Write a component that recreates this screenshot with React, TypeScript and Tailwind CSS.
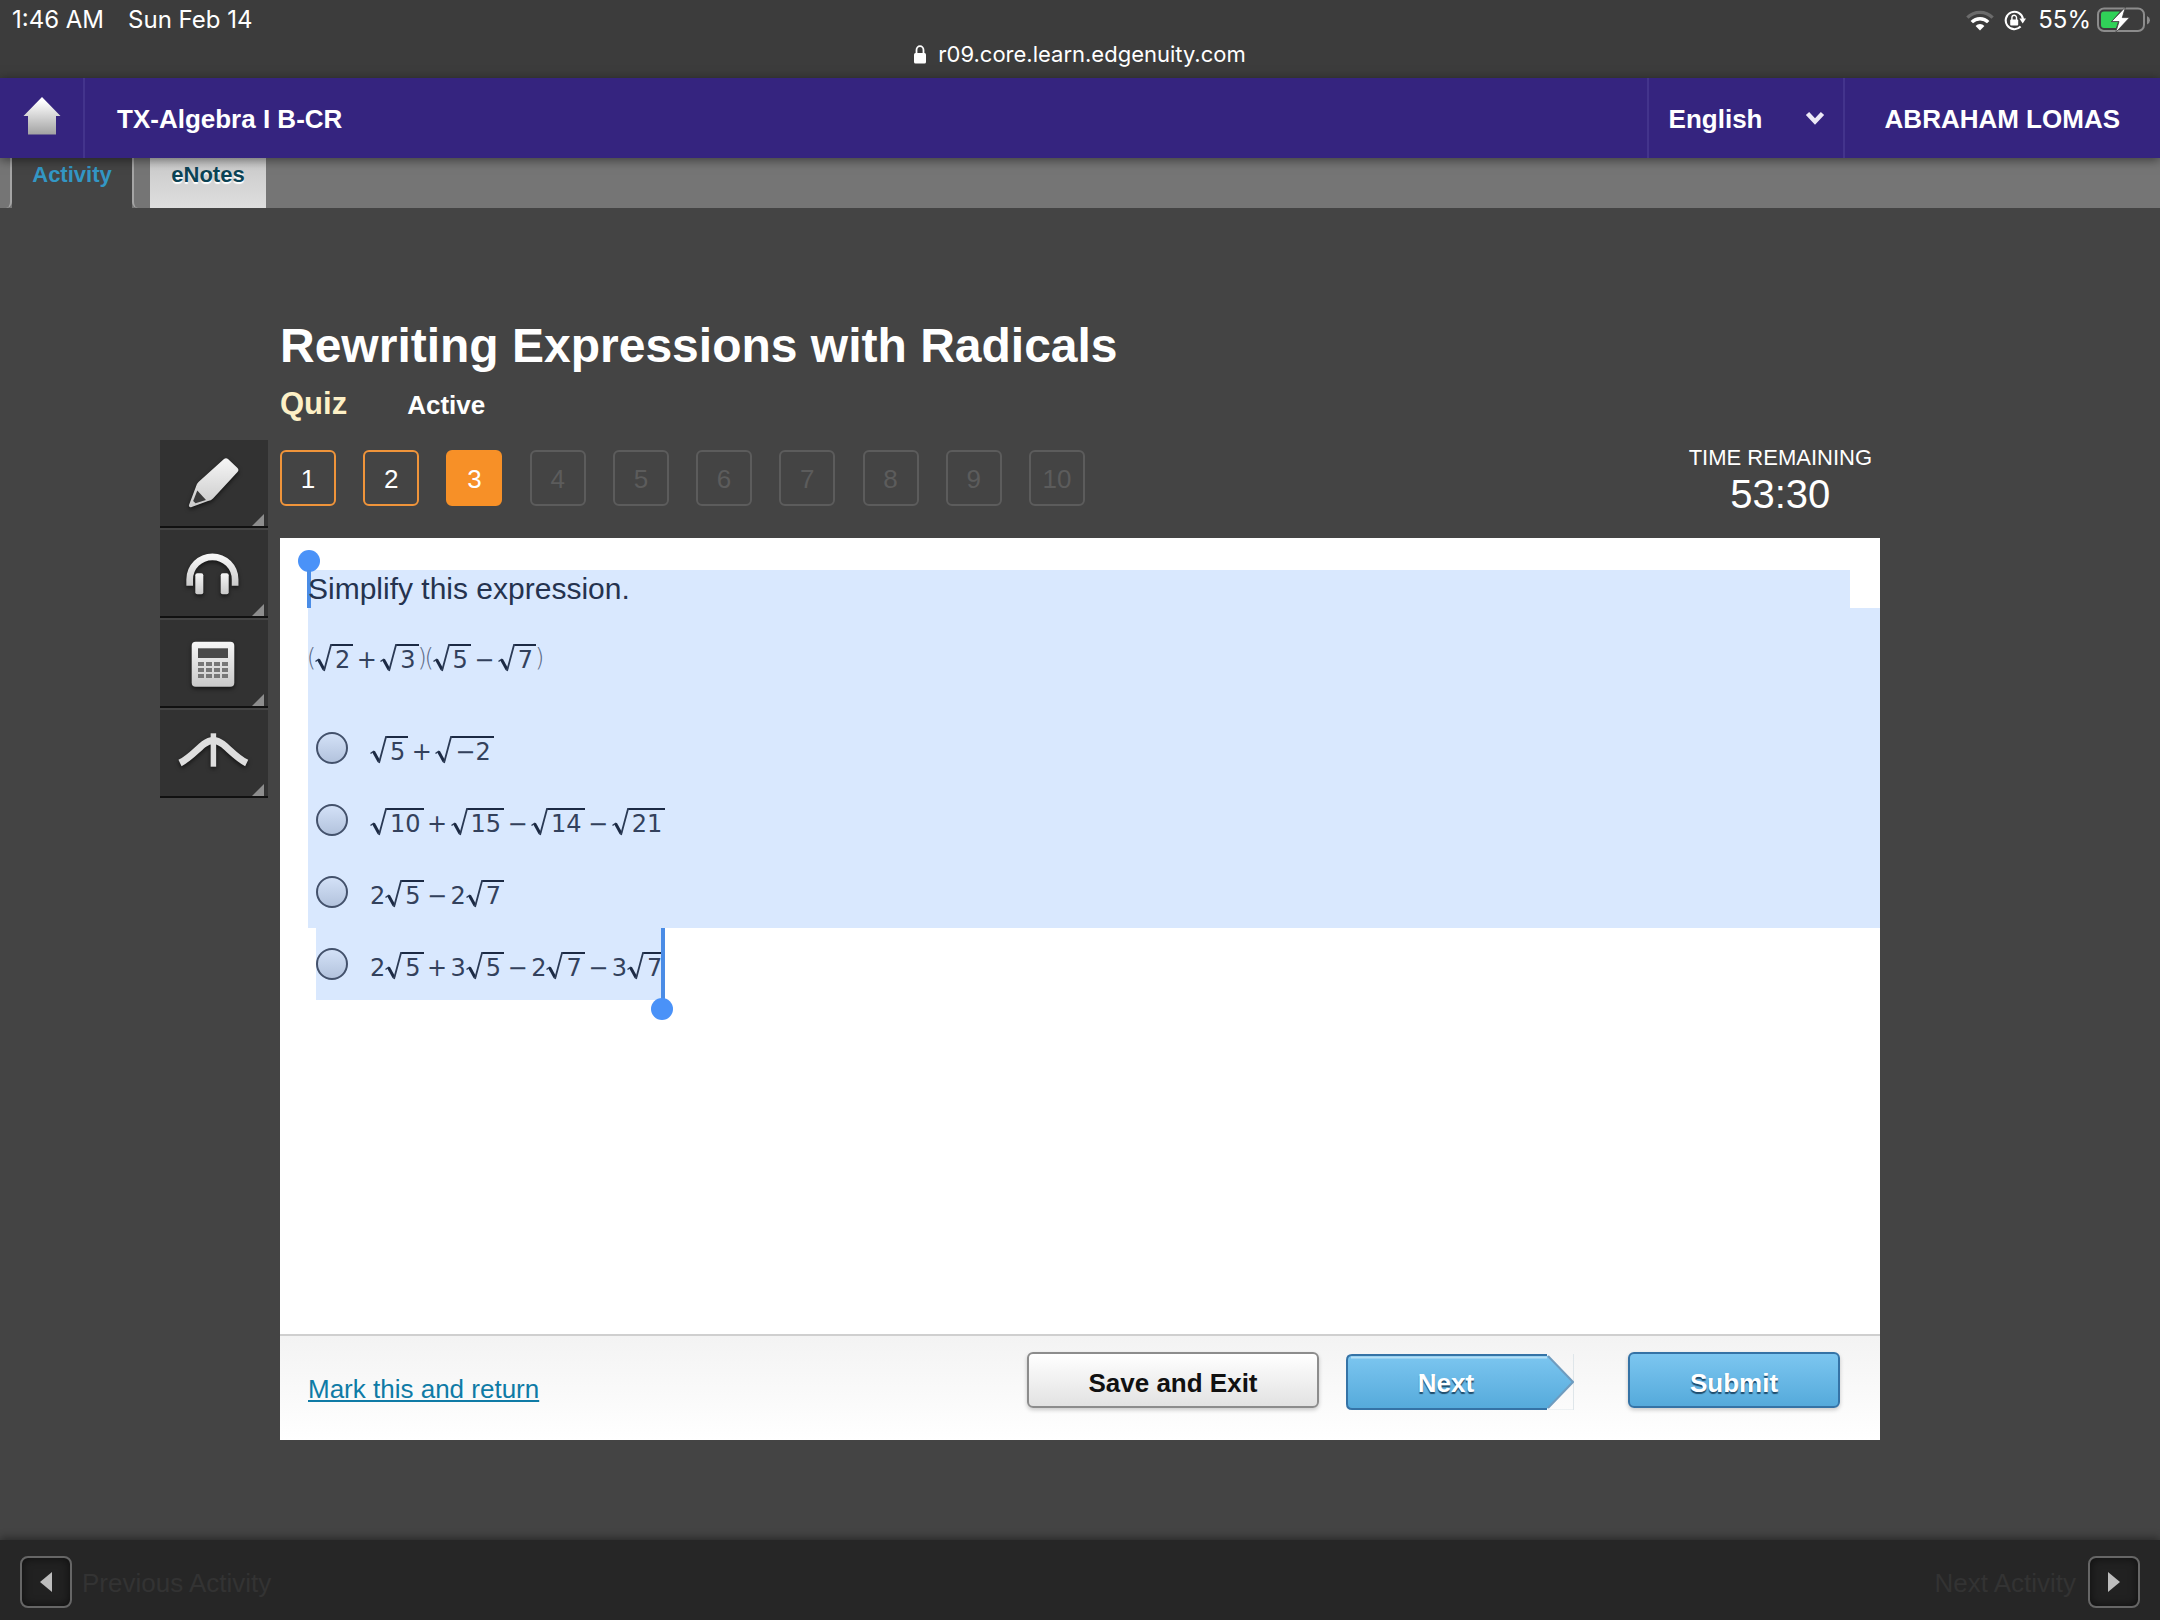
import React from "react";

const sans = "font-['Liberation_Sans',Arial,sans-serif]";
const mathFont = "font-['DejaVu_Sans',Verdana,sans-serif]";

function StatusBar() {
  return (
    <div className="grid h-[78px] grid-cols-3 bg-[#3c3c3c] font-['Inter',sans-serif] text-[24px] leading-7 text-white">
      <div className="flex gap-6 px-3 pt-1.5">
        <span>1:46 AM</span>
        <span>Sun Feb 14</span>
      </div>
      <div className="flex items-end justify-center gap-3 pb-2.5 text-[22px]">
        <svg className="mb-1 h-[19px] w-3" viewBox="0 0 12 19" aria-hidden="true">
          <path d="M2.5 9V5a3.5 3.8 0 0 1 7 0v4" fill="none" stroke="#fff" strokeWidth="1.8" />
          <rect x="0" y="8" width="12" height="10.5" rx="1.5" fill="#fff" />
        </svg>
        <span>r09.core.learn.edgenuity.com</span>
      </div>
      <div className="flex h-10 items-center justify-end pr-2.5">
        <svg className="mr-2.5 h-[21px] w-7" viewBox="0 0 28 21" aria-label="Wi-Fi">
          <path d="M1.4 7.6a17.8 17.8 0 0 1 25.2 0" fill="none" stroke="#6b6b6b" strokeWidth="3.4" />
          <path d="M5.8 12.1a11.6 11.6 0 0 1 16.4 0" fill="none" stroke="#fff" strokeWidth="3.4" />
          <path d="M9.6 15.9a6.2 6.2 0 0 1 8.8 0L14 20.6z" fill="#fff" />
        </svg>
        <svg className="mr-3 h-[21px] w-[22px]" viewBox="0 0 22 21" aria-label="Rotation lock">
          <path d="M16.6 16.6a8.7 8.7 0 1 1 2.4-7.6" fill="none" stroke="#fff" strokeWidth="2.1" />
          <path d="M15.4 8.6h6.6l-3.3 4.8z" fill="#fff" />
          <rect x="6.2" y="9.4" width="8" height="6" rx="1" fill="#fff" />
          <path d="M7.9 10V7.6a2.3 2.3 0 0 1 4.6 0V10" fill="none" stroke="#fff" strokeWidth="1.4" />
        </svg>
        <span className="mr-1.5">55%</span>
        <svg className="h-[26px] w-[53px]" viewBox="0 0 53 26" aria-label="Battery charging">
          <rect x="1" y="1.5" width="46" height="22.5" rx="6" fill="none" stroke="#8c8c8c" strokeWidth="2" />
          <path d="M50 9v8.5q3-1.5 3-4.2T50 9z" fill="#8c8c8c" />
          <path d="M7 4.500h16l-9 10.500h7l-2 6H7a3 3 0 0 1-3-3v-10.500a3 3 0 0 1 3-3z" fill="#30d158" />
          <path d="M28.500 0 14.500 14.600h7.500L18.600 25.600 32.600 10.600h-7.300z" fill="#fff" stroke="#3c3c3c" strokeWidth="0.8" />
        </svg>
      </div>
    </div>
  );
}

function Header() {
  return (
    <header className="relative z-10 flex h-20 items-stretch bg-[#35247f] text-[26px] font-bold text-white shadow-[0_2px_10px_rgba(0,0,0,0.5)]">
      <a href="#home" aria-label="Home" className="flex w-[85px] items-center justify-center border-r-2 border-[#43348c] pb-1">
        <svg className="h-10 w-[38px]" viewBox="0 0 38 40">
          <defs>
            <linearGradient id="home" x1="0" y1="0" x2="0" y2="1">
              <stop offset="0.1" stopColor="#fff" />
              <stop offset="1" stopColor="#a2a2a2" />
            </linearGradient>
          </defs>
          <path d="M19 1 37.500 20H33v18.500H5V20H.5z" fill="url(#home)" />
        </svg>
      </a>
      <h2 className="flex flex-1 items-center pt-0.5 pl-8">TX-Algebra I B-CR</h2>
      <div className="relative flex w-[196px] border-l-2 border-[#43348c]">
        <select aria-label="Language" className="w-full appearance-none bg-transparent pt-0.5 pl-5 font-bold outline-none">
          <option>English</option>
        </select>
        <svg className="pointer-events-none absolute top-8 right-[18px] h-4 w-5" viewBox="0 0 20 16" aria-hidden="true">
          <path d="m2.500 3.500 7.500 8 7.500-8" fill="none" stroke="#ece9f6" strokeWidth="4.500" />
        </svg>
      </div>
      <div className="flex items-center border-l-2 border-[#43348c] pt-0.5 pr-10 pl-10">ABRAHAM LOMAS</div>
    </header>
  );
}

function Tabs() {
  return (
    <nav className="flex h-[50px] items-stretch bg-[#757575] text-[22px] leading-[34px] font-bold">
      <span className="w-3 rounded-br-md border-r-2 border-[#a5a5a5]" />
      <button type="button" className="flex w-[120px] items-start justify-center bg-[#444] text-[#3397c5]">Activity</button>
      <span className="w-[18px] rounded-bl-md border-l-2 border-[#a5a5a5]" />
      <button type="button" className="flex w-[116px] items-start justify-center bg-[linear-gradient(#c9c9c9,#dedede)] text-[#0b4355] [text-shadow:0_2px_1px_#fff]">eNotes</button>
    </nav>
  );
}

function Tool({ label, children }: { label: string; children: React.ReactNode }) {
  return (
    <button
      type="button"
      aria-label={label}
      className="relative flex h-[88px] w-full items-center justify-center border-b-2 border-[#111] bg-[#323232]"
    >
      <svg className="h-[66px] w-[76px] drop-shadow-[0_2px_2px_rgba(0,0,0,0.6)]" viewBox="0 0 76 66">
        {children}
      </svg>
      <svg className="absolute right-1 bottom-0 h-3 w-3" viewBox="0 0 12 12" aria-hidden="true">
        <path d="M12 0v12H0z" fill="#8d8d8d" />
      </svg>
    </button>
  );
}

function Toolbar() {
  return (
    <aside className="mt-[232px] flex w-[108px] shrink-0 flex-col gap-0.5">
      <svg className="absolute h-0 w-0" aria-hidden="true">
        <defs>
          <linearGradient id="silver" x1="0" y1="0" x2="0" y2="1">
            <stop offset="0" stopColor="#f6f6f6" />
            <stop offset="1" stopColor="#c9c9c9" />
          </linearGradient>
        </defs>
      </svg>
      <Tool label="Highlighter">
        <path d="M52 9q-2-1.500-4 0L22.500 32q-2 2-2.500 4.500L13 55q-.5 2.500 2 2.200L32 51q3-.4 5-2.500L61.500 22q1.800-2.200 0-4z" fill="url(#silver)" />
        <path d="M21.300 40.500 30 50l-10.500 3.300-2.300-2.300z" fill="#3a3a3a" />
      </Tool>
      <Tool label="Read aloud">
        <path d="M13.700 45.700v-6.200a22.700 22.700 0 0 1 45.400 0v6.200" fill="none" stroke="url(#silver)" strokeWidth="6.700" />
        <rect x="19.300" y="33.300" width="8" height="21" rx="2" fill="url(#silver)" />
        <rect x="44.700" y="33.300" width="8" height="21" rx="2" fill="url(#silver)" />
      </Tool>
      <Tool label="Calculator">
        <rect x="15.700" y="11.700" width="42.600" height="45" rx="4" fill="url(#silver)" />
        <path d="M22 18.300h30V28H22z" fill="#4a4a4a" />
        <path d="M22 34h30M22 40h30M22 46h30" stroke="#777" strokeWidth="4" strokeDasharray="6 2" />
      </Tool>
      <Tool label="Graphing tool">
        <path d="M4 43C14 38 22 28.500 28 24q9.300-7 18.600 0C52.600 28.500 60.600 38 70.700 43" fill="none" stroke="#dedede" strokeWidth="7" />
        <path d="M37.400 13.300v33.400" stroke="#dedede" strokeWidth="5.500" />
      </Tool>
    </aside>
  );
}

function Root({ children }: { children: React.ReactNode }) {
  return (
    <span className="flex h-7">
      <svg className="h-7 w-[17px]" viewBox="0 0 17 28" aria-hidden="true">
        <path d="M.5 17.500 4 15" fill="none" stroke="#2b3a55" strokeWidth="1.500" />
        <path d="m3.500 15.500 5.500 10" fill="none" stroke="#1c2a44" strokeWidth="3" />
        <path d="M9 27 16 1h1" fill="none" stroke="#2b3a55" strokeWidth="1.800" />
      </svg>
      <span className="border-t-2 border-[#1c2a44] px-[3px] leading-7">{children}</span>
    </span>
  );
}

function Op({ children }: { children: React.ReactNode }) {
  return <span className="w-[27px] text-center leading-8">{children}</span>;
}

function Num({ children }: { children: React.ReactNode }) {
  return <span className="leading-8">{children}</span>;
}

function Paren({ children }: { children: React.ReactNode }) {
  return <span className="flex w-[7px] justify-center leading-7 font-extralight text-[#5c6b86]">{children}</span>;
}

function MathLine({ children }: { children: React.ReactNode }) {
  return <span className={`flex h-7 text-[24px] whitespace-nowrap text-[#33415c] ${mathFont}`}>{children}</span>;
}

const options: { id: string; math: React.ReactNode }[] = [
  { id: "a", math: <><Root>5</Root><Op>+</Op><Root>−2</Root></> },
  { id: "b", math: <><Root>10</Root><Op>+</Op><Root>15</Root><Op>−</Op><Root>14</Root><Op>−</Op><Root>21</Root></> },
  { id: "c", math: <><Num>2</Num><Root>5</Root><Op>−</Op><Num>2</Num><Root>7</Root></> },
  { id: "d", math: <><Num>2</Num><Root>5</Root><Op>+</Op><Num>3</Num><Root>5</Root><Op>−</Op><Num>2</Num><Root>7</Root><Op>−</Op><Num>3</Num><Root>7</Root></> },
];

function Option({ id, math }: { id: string; math: React.ReactNode }) {
  return (
    <label className="flex h-[72px] items-center">
      <input
        type="radio"
        name="answer"
        value={id}
        className="mr-[22px] h-8 w-8 shrink-0 appearance-none rounded-full border-2 border-[#43516b] bg-[linear-gradient(#d3e1f7,#b3c3dd)]"
      />
      <span className="pt-1">
        <MathLine>{math}</MathLine>
      </span>
    </label>
  );
}

function Question() {
  return (
    <section className="flex-1 pt-8 pl-7">
      <div className="relative mr-[30px] h-[38px] bg-[#d9e8fe]">
        <span className="absolute top-[-20px] -left-2.5 h-[22px] w-[22px] rounded-full bg-[#4a92f8]" />
        <span className="absolute top-0 -left-px h-[38px] w-1 bg-[#4a8ce6]" />
        <p className="relative text-[30px] leading-[38px] text-[#25334f]">Simplify this expression.</p>
      </div>
      <div className="bg-[#d9e8fe] pt-9">
        <MathLine>
          <Paren>(</Paren><Root>2</Root><Op>+</Op><Root>3</Root><Paren>)</Paren>
          <Paren>(</Paren><Root>5</Root><Op>−</Op><Root>7</Root><Paren>)</Paren>
        </MathLine>
        <div className="pt-10 pl-2">
          {options.slice(0, 3).map((o) => <Option key={o.id} {...o} />)}
        </div>
      </div>
      <div className="relative ml-2 w-fit bg-[#d9e8fe]">
        <Option {...options[3]} />
        <span className="absolute top-0 right-0 h-[72px] w-1 bg-[#4a8ce6]" />
        <span className="absolute -right-2 -bottom-5 h-[22px] w-[22px] rounded-full bg-[#4a92f8]" />
      </div>
    </section>
  );
}

function CardFooter() {
  return (
    <footer className="flex h-[106px] items-start border-t-2 border-[#cfcfcf] bg-[linear-gradient(#f3f3f3,#fff)] pt-4 pr-10 pl-7 text-[26px] font-bold">
      <a href="#mark" className="mt-[21px] mr-auto leading-8 font-normal text-[#0f7ba6] underline">Mark this and return</a>
      <button type="button" className="mr-[27px] h-14 w-[292px] rounded-md border-2 border-[#8c8c8c] bg-[linear-gradient(#fff,#e2e2e2)] pt-1.5 text-[#111] shadow-[0_2px_4px_rgba(0,0,0,0.2)]">
        Save and Exit
      </button>
      <button type="button" className="relative mt-0.5 mr-[54px] h-14 w-[228px] text-white">
        <svg className="absolute inset-0 h-full w-full" viewBox="0 0 228 56" aria-hidden="true">
          <defs>
            <linearGradient id="blue" x1="0" y1="0" x2="0" y2="1">
              <stop offset="0" stopColor="#7cc6f0" />
              <stop offset="1" stopColor="#55aadb" />
            </linearGradient>
          </defs>
          <path d="M227.500 0v56H202" fill="none" stroke="#dfe6ea" strokeWidth="1" />
          <path d="M6 1h193q2 0 3.500 1.500L227 28l-24.500 25.500Q201 55 199 55H6q-5 0-5-5V6q0-5 5-5z" fill="url(#blue)" />
          <path d="M202 2 227 28l-25 26" fill="none" stroke="#6f9cbf" strokeWidth="2" />
          <path d="M201 1H6Q1 1 1 6v44q0 5 5 5h195" fill="none" stroke="#3573a6" strokeWidth="2" />
          <path d="M5 3.500h196" stroke="#b5dff6" strokeWidth="2" />
        </svg>
        <span className="relative block pt-0.5 pr-7 [text-shadow:0_2px_1px_#1f4c6c]">Next</span>
      </button>
      <button type="button" className="h-14 w-[212px] rounded-md border-2 border-[#3573a6] bg-[linear-gradient(#7cc6f0,#55aadb)] pt-1.5 text-white shadow-[0_2px_4px_rgba(0,0,0,0.2)] [text-shadow:0_2px_1px_#1f4c6c]">
        Submit
      </button>
    </footer>
  );
}

function Progress() {
  return (
    <ol className="flex w-[805px] justify-between text-[26px]">
      {Array.from({ length: 10 }, (_, i) => i + 1).map((n) => (
        <li key={n}>
          <button
            type="button"
            disabled={n > 3}
            className={
              "h-14 w-14 rounded-md border-2 pt-0.5 " +
              (n < 3
                ? "border-[#f0943a] text-white"
                : n === 3
                  ? "border-[#f79027] bg-[#f79027] text-white"
                  : "border-[#5c5c5c] text-[#5c5c5c]")
            }
          >
            {n}
          </button>
        </li>
      ))}
    </ol>
  );
}

function BottomBar() {
  const box = "flex h-[52px] w-[52px] items-center justify-center rounded-lg border-2 border-[#666] bg-[#212121] shadow-[inset_0_0_10px_rgba(0,0,0,0.6)]";
  return (
    <footer className="flex h-20 items-center justify-between bg-[#262626] px-5 pt-1 text-[26px] text-[#333] shadow-[0_-2px_8px_rgba(0,0,0,0.4)]">
      <div className="flex items-center gap-2.5">
        <button type="button" aria-label="Previous Activity" className={box}>
          <svg className="h-5 w-3" viewBox="0 0 12 20"><path d="M12 0v20L0 10z" fill="#bdbdbd" /></svg>
        </button>
        <span className="pt-0.5">Previous Activity</span>
      </div>
      <div className="flex items-center gap-3">
        <span className="pt-0.5">Next Activity</span>
        <button type="button" aria-label="Next Activity" className={box}>
          <svg className="h-5 w-3" viewBox="0 0 12 20"><path d="M0 0v20l12-10z" fill="#bdbdbd" /></svg>
        </button>
      </div>
    </footer>
  );
}

export default function App() {
  return (
    <div className={`flex min-h-screen flex-col bg-[#444] ${sans}`}>
      <StatusBar />
      <Header />
      <Tabs />
      <main className="flex flex-1 justify-center gap-3 pr-[120px]">
        <Toolbar />
        <div className="mb-[100px] flex max-w-[1600px] flex-1 flex-col pt-[108px] text-white">
          <h1 className="text-[48px] leading-[60px] font-bold">Rewriting Expressions with Radicals</h1>
          <div className="flex items-baseline gap-[60px] pt-2 font-bold">
            <span className="text-[31px] leading-10 text-[#fdf0c6]">Quiz</span>
            <span className="text-[26px] leading-10">Active</span>
          </div>
          <div className="flex items-start justify-between pt-[25px] pb-5">
            <Progress />
            <div className="mr-2 -mt-1 flex flex-col items-center">
              <span className="text-[22px] leading-6">TIME REMAINING</span>
              <span className="text-[40px] leading-[48px]">53:30</span>
            </div>
          </div>
          <div className="flex flex-1 flex-col bg-white">
            <Question />
            <CardFooter />
          </div>
        </div>
      </main>
      <BottomBar />
    </div>
  );
}
